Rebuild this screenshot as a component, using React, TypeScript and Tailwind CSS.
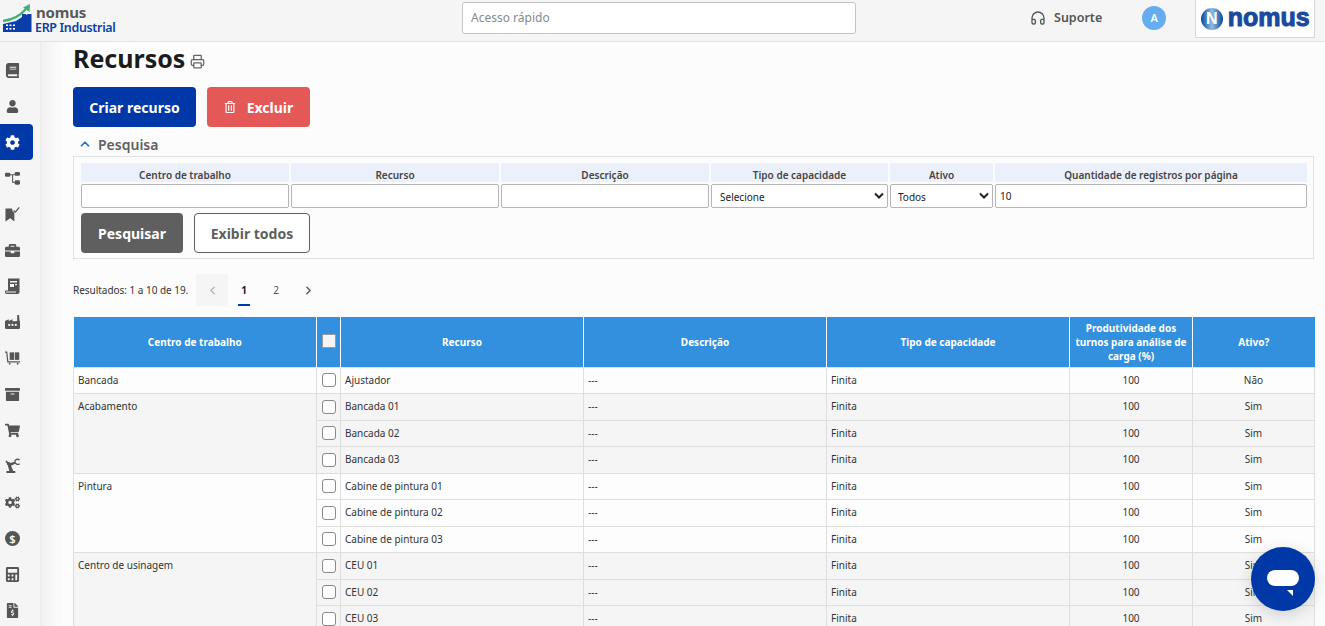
import React from "react";
import { FaUser, FaCog, FaBriefcase, FaShoppingCart, FaCogs, FaRegTrashAlt, FaArchive, FaCalculator, FaFileInvoiceDollar, FaBook } from "react-icons/fa";
import { LuHeadphones, LuChevronUp, LuChevronLeft, LuChevronRight, LuPrinter } from "react-icons/lu";

const I = "#555";

function Network() {
  return (
    <svg width="17" height="15" viewBox="0 0 17 15" fill={I}>
      <rect x="0" y="1" width="6" height="4.5" rx="1.5" />
      <rect x="11" y="0" width="6" height="4.5" rx="1.5" />
      <rect x="11" y="9.5" width="6" height="5" rx="1.5" />
      <path d="M5 2.6h7v1.2H9.2v7.4H12v1.2H8V3.8H5z" />
    </svg>
  );
}
function BookmarkCheck() {
  return (
    <svg width="16" height="16" viewBox="0 0 16 16" fill={I}>
      <path d="M0.5 2h7l.6 3 1.9 1.6V16L5.5 12.5 0.5 16z" />
      <path d="M9.2 4.2l1.8 1.8 4.2-5" fill="none" stroke={I} strokeWidth="1.4" />
    </svg>
  );
}
function Receipt() {
  return (
    <svg width="15" height="16" viewBox="0 0 15 16" fill={I}>
      <path d="M3 0.5h11.5V14a2 2 0 0 1-2 2H2a2 2 0 0 1-2-2v-1.5h3z" />
      <rect x="5" y="3" width="7" height="1.5" fill="#f5f5f5" />
      <rect x="5" y="6" width="4" height="3" fill="#f5f5f5" />
      <rect x="10" y="6" width="2" height="1.2" fill="#f5f5f5" />
      <path d="M1 13.5h10v1H1z" fill="#f5f5f5" />
    </svg>
  );
}
function Factory() {
  return (
    <svg width="16" height="16" viewBox="0 0 16 16" fill={I}>
      <path d="M13 0.5h2l.6 7.5H13z" />
      <path d="M0 7l4-2v2l4-2v2.2l8-.2v7a1.5 1.5 0 0 1-1.5 1.5h-13A1.5 1.5 0 0 1 0 14z" />
      <rect x="3.5" y="10" width="2" height="2.2" fill="#f5f5f5" />
      <rect x="7" y="10" width="2" height="2.2" fill="#f5f5f5" />
      <rect x="10.5" y="10" width="2" height="2.2" fill="#f5f5f5" />
    </svg>
  );
}
function Pallet() {
  return (
    <svg width="16" height="14" viewBox="0 0 16 14" fill={I}>
      <path d="M0 0h2.4l1.2 10.5H16v1.3H2.4L1.3 1.3H0z" />
      <rect x="5" y="1" width="4.6" height="8" />
      <rect x="10.4" y="1" width="4.8" height="8" />
      <circle cx="5" cy="13" r="1" />
      <circle cx="13.5" cy="13" r="1" />
    </svg>
  );
}
function Robot() {
  return (
    <svg width="16" height="16" viewBox="0 0 16 16" fill={I}>
      <path d="M1.5 15.5h9.5v-2.2H8.8L6.5 7.6 10.8 5.6l-.6-2.2-5.7 1.7L1.7 2 .5 3l2.4 4L4.6 13.300H1.500z" />
      <circle cx="4" cy="5.500" r="1.800" />
      <path d="M15.500 1.600A3 3 0 0 0 10.500 3.500a3 3 0 0 0 5 2" fill="none" stroke={I} strokeWidth="1.500" />
    </svg>
  );
}
function Dollar() {
  return (
    <div className="w-[15px] h-[15px] rounded-full bg-[#555] text-white text-[11px] leading-[15px] text-center font-semibold">$</div>
  );
}

const sideIcons: React.ReactNode[] = [
  <FaBook size={15} color={I} />,
  <FaUser size={13} color={I} />,
  <FaCog size={15} color="#fff" />,
  <Network />,
  <BookmarkCheck />,
  <FaBriefcase size={15} color={I} />,
  <Receipt />,
  <Factory />,
  <Pallet />,
  <FaArchive size={15} color={I} />,
  <FaShoppingCart size={17} color={I} />,
  <Robot />,
  <FaCogs size={17} color={I} />,
  <Dollar />,
  <FaCalculator size={15} color={I} />,
  <FaFileInvoiceDollar size={15} color={I} />,
];

type Row = { c?: string; span?: number; r: string; a: string; shade: boolean };
const rows: Row[] = [
  { c: "Bancada", span: 1, r: "Ajustador", a: "Não", shade: false },
  { c: "Acabamento", span: 3, r: "Bancada 01", a: "Sim", shade: true },
  { r: "Bancada 02", a: "Sim", shade: true },
  { r: "Bancada 03", a: "Sim", shade: true },
  { c: "Pintura", span: 3, r: "Cabine de pintura 01", a: "Sim", shade: false },
  { r: "Cabine de pintura 02", a: "Sim", shade: false },
  { r: "Cabine de pintura 03", a: "Sim", shade: false },
  { c: "Centro de usinagem", span: 3, r: "CEU 01", a: "Sim", shade: true },
  { r: "CEU 02", a: "Sim", shade: true },
  { r: "CEU 03", a: "Sim", shade: true },
];

const filterCols = [
  { t: "Centro de trabalho", w: "w-[208px]" },
  { t: "Recurso", w: "w-[208px]" },
  { t: "Descrição", w: "w-[208px]" },
  { t: "Tipo de capacidade", w: "w-[177px]" },
  { t: "Ativo", w: "w-[103px]" },
  { t: "Quantidade de registros por página", w: "flex-1" },
];

const inputCls = "h-[24px] border border-[#b5b5b5] rounded-[2px] bg-white w-full";

export default function App() {
  return (
    <div className="h-[626px] w-[1325px] overflow-hidden relative bg-[#fcfcfc] text-[#333] font-['Noto_Sans','Open_Sans',sans-serif]">
      <header className="h-[42px] bg-[#f5f5f5] border-b border-[#e2e2e2] flex items-start relative">
        <div className="w-[462px] flex items-start pl-[3px] pt-[4px] shrink-0">
          <svg width="29" height="29" viewBox="0 0 29 29">
            <path d="M0 17 C8 16 17 12 23 5" stroke="#3cb371" strokeWidth="2.5" fill="none" />
            <path d="M20 3.5 L27 0 L26.5 8z" fill="#3cb371" />
            <path d="M0 20 L13 17 L19 13 V10 H23 V11 L25 10 H28.5 V28 H0z" fill="#0a3ea8" />
            <g fill="#fff">
              <rect x="3" y="20.5" width="2" height="1.6" /><rect x="6.5" y="20.5" width="2" height="1.6" /><rect x="10" y="20.5" width="2" height="1.6" />
              <rect x="3" y="24" width="2" height="1.6" /><rect x="6.5" y="24" width="2" height="1.6" /><rect x="10" y="24" width="2" height="1.6" />
            </g>
          </svg>
          <div className="ml-[3px] mt-[2px] leading-none">
            <div className="text-[15px] leading-[13px] font-bold text-[#5a5a5a] ml-[1px] tracking-[-0.2px]">nomus</div>
            <div className="text-[12.5px] leading-[15px] font-semibold text-[#0a3ea8] tracking-[-0.35px] whitespace-nowrap mt-[1px]">ERP Industrial</div>
          </div>
        </div>
        <div className="w-[394px] h-[32px] mt-[2px] border border-[#c4c4c4] rounded-[3px] bg-white text-[12px] text-[#8a8a8a] flex items-center px-[8px] shrink-0">Acesso rápido</div>
        <div className="ml-[174px] h-[36px] flex items-center gap-[8px] text-[12.5px] font-semibold text-[#555] shrink-0">
          <LuHeadphones size={16} color="#555" />
          <span>Suporte</span>
        </div>
        <div className="ml-[40px] mt-[6px] w-[24px] h-[24px] rounded-full bg-[#64adf0] text-white text-[11px] font-semibold flex items-center justify-center shrink-0">A</div>
        <div className="ml-[29px] w-[120px] h-[38px] bg-white border-x border-b border-[#d8d8d8] flex items-center justify-center gap-[5px] shrink-0">
          <div className="w-[22px] h-[22px] rounded-full bg-[linear-gradient(90deg,#0a4a9c,#8fbce4_50%,#0a4a9c)] text-white font-extrabold text-[16px] leading-[22px] text-center font-['Liberation_Sans',sans-serif]">N</div>
          <span className="text-[25px] leading-none font-black text-[#1a4a9f] font-['Liberation_Sans',sans-serif] [-webkit-text-stroke:1px_#1a4a9f] -mt-[3px]">nomus</span>
        </div>
      </header>

      <div className="flex h-[584px]">
        <nav className="w-[41px] shrink-0 bg-[#f5f5f5] border-r border-[#ebebeb] pt-[10px] flex flex-col">
          {sideIcons.map((ic, i) => (
            <div
              key={i}
              className={
                "h-[36px] shrink-0 w-[33px] flex items-center pl-[5px] " +
                (i === 2 ? "bg-[#0038a8] rounded-r-[4px]" : "")
              }
            >
              <div className="w-[15px] flex items-center justify-center">{ic}</div>
            </div>
          ))}
        </nav>
        <div className="w-[20px] shrink-0 bg-[linear-gradient(90deg,#f1f1f1,#fcfcfc)]"></div>

        <main className="flex-1 pl-[12px] pr-[11px] overflow-hidden">
          <div className="flex items-center h-[36px] -mt-[2px]">
            <h1 className="text-[25px] leading-[36px] font-bold text-[#1c1c1c]">Recursos</h1>
            <LuPrinter size={15} color="#666" className="ml-[5px] mt-[7px]" />
          </div>
          <div className="flex gap-[11px] mt-[11px]">
            <button className="w-[123px] h-[40px] bg-[#0038a8] rounded-[4px] text-white text-[14px] font-bold">Criar recurso</button>
            <button className="w-[103px] h-[40px] bg-[#e55858] rounded-[4px] text-white text-[14px] font-bold flex items-center justify-center gap-[11px]">
              <FaRegTrashAlt size={12} color="#fff" />
              Excluir
            </button>
          </div>
          <div className="flex items-center mt-[7px] h-[20px] pl-[5px] gap-[6px]">
            <LuChevronUp size={14} color="#1a73c8" strokeWidth={3} />
            <span className="text-[14px] font-semibold text-[#5f5f5f]">Pesquisa</span>
          </div>
          <section className="h-[103px] mt-[2px] border border-[#e2e2e2] pt-[6px] pl-[7px] pr-[6px]">
            <div className="flex gap-[2px]">
              {filterCols.map((f, i) => (
                <div key={i} className={f.w + " shrink-0"}>
                  <div className="h-[19px] bg-[#ebf0fb] text-[10px] font-semibold text-[#444] text-center leading-[25px]">{f.t}</div>
                  <div className="mt-[2px]">
                    {i < 3 && <div className={inputCls}></div>}
                    {i === 3 && (
                      <div className={inputCls + " flex items-center justify-between pl-[8px] pr-[3px] text-[10px] text-[#222]"}>
                        <span className="mt-[2px]">Selecione</span>
                        <svg width="10" height="8" viewBox="0 0 10 8"><path d="M1 1.5 L5 5.5 L9 1.5" fill="none" stroke="#222" strokeWidth="2" /></svg>
                      </div>
                    )}
                    {i === 4 && (
                      <div className={inputCls + " flex items-center justify-between pl-[7px] pr-[3px] text-[10px] text-[#222]"}>
                        <span className="mt-[2px]">Todos</span>
                        <svg width="10" height="8" viewBox="0 0 10 8"><path d="M1 1.5 L5 5.5 L9 1.5" fill="none" stroke="#222" strokeWidth="2" /></svg>
                      </div>
                    )}
                    {i === 5 && <div className={inputCls + " flex items-center px-[4px] text-[10px] text-[#222]"}>10</div>}
                  </div>
                </div>
              ))}
            </div>
            <div className="flex gap-[11px] mt-[5px]">
              <button className="w-[102px] h-[40px] rounded-[4px] bg-[#5f5f5f] text-white text-[14px] font-bold">Pesquisar</button>
              <button className="w-[116px] h-[40px] rounded-[4px] bg-white border border-[#5f5f5f] text-[#5f5f5f] text-[14px] font-bold">Exibir todos</button>
            </div>
          </section>

          <div className="flex items-center mt-[15px] h-[32px] text-[10px] text-[#333]">
            <span className="w-[123px] shrink-0 tracking-[-0.03px]">Resultados: 1 a 10 de 19.</span>
            <div className="w-[32px] h-[32px] bg-[#f5f5f5] rounded-[3px] flex items-center justify-center">
              <LuChevronLeft size={13} color="#b5b5b5" strokeWidth={2.5} />
            </div>
            <div className="w-[32px] h-[32px] flex items-center justify-center font-bold text-[#222] relative">
              1
              <div className="absolute left-[10px] right-[10px] bottom-0 h-[2px] bg-[#0038a8]"></div>
            </div>
            <div className="w-[32px] h-[32px] flex items-center justify-center text-[#555]">2</div>
            <div className="w-[32px] h-[32px] flex items-center justify-center">
              <LuChevronRight size={13} color="#555" strokeWidth={2.5} />
            </div>
          </div>

          <table className="mt-[11px] w-[1241px] table-fixed border-collapse text-[10px] text-[#333]">
            <colgroup>
              <col className="w-[243px]" />
              <col className="w-[24px]" />
              <col className="w-[243px]" />
              <col className="w-[243px]" />
              <col className="w-[243px]" />
              <col className="w-[123px]" />
              <col className="w-[122px]" />
            </colgroup>
            <thead>
              <tr className="h-[50px] bg-[#3290de] text-white font-bold">
                <th className="border-r border-white px-[4px] pt-[2px]">Centro de trabalho</th>
                <th className="border-r border-white p-0">
                  <div className="w-[14px] h-[14px] mx-auto bg-[#f5f5f5] border border-[#9a9a9a] rounded-[1px] -mt-[2px]"></div>
                </th>
                <th className="border-r border-white px-[4px] pt-[2px]">Recurso</th>
                <th className="border-r border-white px-[4px] pt-[2px]">Descrição</th>
                <th className="border-r border-white px-[4px] pt-[2px]">Tipo de capacidade</th>
                <th className="border-r border-white px-[3px] leading-[14px]">Produtividade dos turnos para análise de carga (%)</th>
                <th className="px-[4px] pt-[2px]">Ativo?</th>
              </tr>
            </thead>
            <tbody>
              {rows.map((row, i) => {
                const bg = row.shade ? "bg-[#f5f5f5]" : "bg-[#fdfdfd]";
                const cell = "border border-[#dedede] px-[4px] " + bg;
                return (
                  <tr key={i} className="h-[26.5px]">
                    {row.c && (
                      <td rowSpan={row.span} className={cell + " align-top pt-[5px] leading-[14px]"}>{row.c}</td>
                    )}
                    <td className={cell + " p-0"}>
                      <div className="w-[14px] h-[14px] mx-auto bg-white border border-[#8a8a8a] rounded-[3px]"></div>
                    </td>
                    <td className={cell}>{row.r}</td>
                    <td className={cell}>---</td>
                    <td className={cell}>Finita</td>
                    <td className={cell + " text-center"}>100</td>
                    <td className={cell + " text-center"}>{row.a}</td>
                  </tr>
                );
              })}
            </tbody>
          </table>
        </main>
      </div>

      <div className="absolute left-[1251px] top-[547px] w-[64px] h-[64px] rounded-full bg-[#0038a8] shadow-[0_4px_16px_rgba(0,0,0,0.15)] flex items-center justify-center">
        <div className="relative w-[32px] h-[16px] rounded-[8px] bg-white -mt-[3px]">
          <div className="absolute left-[20px] top-[20px] w-0 h-0 border-l-[6px] border-l-transparent border-t-[6px] border-t-white"></div>
        </div>
      </div>
    </div>
  );
}
